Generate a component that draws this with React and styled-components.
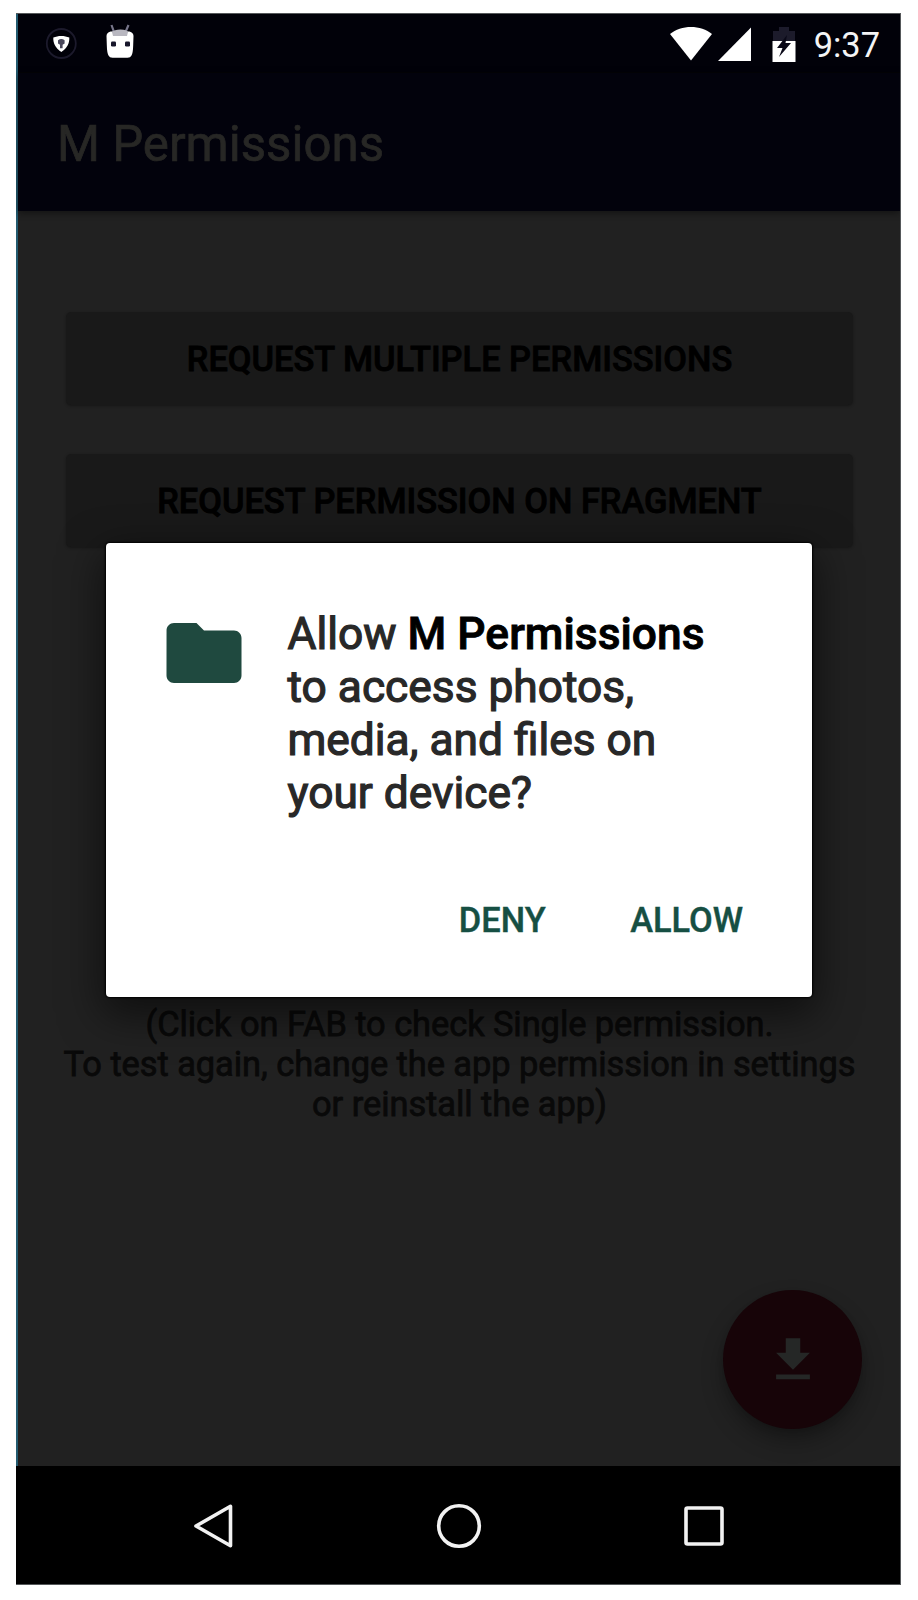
import React from "react";
import styled, { createGlobalStyle } from "styled-components";

const GlobalStyle = createGlobalStyle`
  * { box-sizing: border-box; }
  body { margin: 0; background: #fff; font-family: Roboto, sans-serif; }
  svg { display: block; flex: none; }
`;

const Page = styled.div`
  width: 918px;
  height: 1600px;
  padding: 13px 16px 0;
`;

const Phone = styled.main`
  position: relative;
  display: flex;
  flex-direction: column;
  width: 885px;
  height: 1572px;
  background: #212121;
  border: 1px solid #55585a;
  border-left: 0;
  overflow: hidden;
`;

const Screen = styled.div`
  display: flex;
  flex-direction: column;
  height: 1452px;
  border-left: 2px solid #235b70;
`;

const StatusBar = styled.header`
  display: flex;
  align-items: flex-start;
  justify-content: space-between;
  height: 58px;
  padding: 9px 20px 0 27px;
  background: #010109;
`;

const StatusGroup = styled.div`
  display: flex;
  align-items: flex-start;
  gap: ${(p) => p.$gap};
`;

const Clock = styled.time`
  margin-top: 1px;
  color: #f4f4f6;
  font-size: 34.4px;
  line-height: 42px;
`;

const AppBar = styled.div`
  display: flex;
  align-items: center;
  height: 139px;
  padding: 3px 0 0 39px;
  background: #02020c;
  border-top: 1px solid #020205;
  box-shadow: 0 2px 7px rgba(0, 0, 0, 0.45);
`;

const Title = styled.h1`
  margin: 0;
  color: #272725;
  font-size: 49.2px;
  font-weight: 400;
  -webkit-text-stroke: 0.7px #272725;
`;

const Content = styled.section`
  display: flex;
  flex-direction: column;
  height: 1255px;
  padding: 101px 47px 37px 48px;
`;

const RequestButton = styled.button`
  height: 93px;
  margin: 0 0 49px;
  padding: 0;
  border: 0;
  border-radius: 5px;
  background: #191919;
  box-shadow: 0 1px 3px rgba(0, 0, 0, 0.35);
  color: #000;
  font: 500 34.4px Roboto, sans-serif;
  -webkit-text-stroke: 0.8px #000;
`;

const Hint = styled.p`
  margin: 408px -20px 0;
  color: #090909;
  font-size: 34.4px;
  line-height: 40px;
  letter-spacing: -0.05px;
  text-align: center;
  white-space: nowrap;
  -webkit-text-stroke: 0.8px #090909;
`;

const Fab = styled.button`
  display: flex;
  align-items: center;
  justify-content: center;
  align-self: flex-end;
  width: 139px;
  height: 139px;
  margin: auto -9px 0 0;
  padding: 0;
  border: 0;
  border-radius: 50%;
  background: #170408;
  box-shadow: 0 12px 22px rgba(0, 0, 0, 0.3), 0 3px 6px rgba(0, 0, 0, 0.1);
`;

const NavBar = styled.nav`
  display: flex;
  align-items: center;
  justify-content: center;
  flex: 1;
  padding-left: 1px;
  background: #000;
`;

const NavButton = styled.button`
  display: flex;
  align-items: center;
  justify-content: center;
  width: 245.5px;
  height: 100%;
  padding: 2px 0 0;
  border: 0;
  background: none;
`;

const Dialog = styled.div`
  position: absolute;
  top: 529px;
  left: 90px;
  width: 706px;
  height: 454px;
  display: flex;
  flex-direction: column;
  padding: 65px 52px 0 53px;
  border-radius: 4px;
  background: #fff;
  box-shadow: 0 0 2px 1px #000, 0 14px 42px 4px rgba(0, 0, 0, 0.55);
`;

const DialogBody = styled.div`
  display: flex;
  gap: 38.5px;
`;

const Message = styled.p`
  margin: 0;
  color: #282828;
  font-size: 44.3px;
  line-height: 53px;
  white-space: nowrap;
  -webkit-text-stroke: 1.2px #282828;
`;

const AppName = styled.b`
  color: #000;
  font-weight: 500;
  letter-spacing: 0.05px;
  -webkit-text-stroke: 0.9px #000;
`;

const Actions = styled.div`
  display: flex;
  justify-content: flex-end;
  gap: 84.5px;
  margin-top: 71px;
  padding-right: 17px;
`;

const ActionButton = styled.button`
  padding: 0;
  border: 0;
  background: none;
  color: #164f43;
  font: 500 34.4px/58px Roboto, sans-serif;
  -webkit-text-stroke: 0.4px #164f43;
`;

const ShieldIcon = () => (
  <svg width="34" height="40" viewBox="0 0 34 40">
    <circle cx="16.3" cy="20.5" r="14.5" fill="none" stroke="#1c1a2c" strokeWidth="1.8" />
    <path d="M16.3 13c3 0 5.500.6 8 1.500.3 6-2.300 10.800-8 14.500-5.700-3.700-8.300-8.500-8-14.500 2.500-.9 5-1.500 8-1.500z" fill="#fff" />
    <path d="M13 17.300q3.300-2.600 6.600 0v3.200l-2 1.200v3.600h-2.600v-3.600l-2-1.200z" fill="#4a485c" />
  </svg>
);

const RobotIcon = () => (
  <svg width="34" height="40" viewBox="0 0 34 40">
    <path d="M7.500 2l2.500 7M24.500 2l-3 7" stroke="#77768a" strokeWidth="2.200" />
    <path d="M2.500 13q0-3.500 4-4.500h19q4 1 4 4.500l-.3 9q-.2 8-1.700 10.500-1 2.200-4 2.200H8.500q-3 0-4-2.200Q3 30 2.800 22z" fill="#fff" />
    <path d="M8 9q2-2.500 8.500-2.500T24 9l-1 4H9z" fill="#b8b7c0" />
    <rect x="7" y="18.500" width="5" height="5" rx="1.200" fill="#17162b" />
    <rect x="21" y="18.500" width="5" height="5" rx="1.200" fill="#17162b" />
  </svg>
);

const WifiIcon = () => (
  <svg width="42" height="40" viewBox="0 0 42 40">
    <path d="M0 11C11 1.500 31 1.500 42 11L21 37.500z" fill="#fff" />
  </svg>
);

const SignalIcon = () => (
  <svg width="35" height="40" viewBox="0 0 35 40">
    <path d="M34 4.500v33.500H1z" fill="#fff" />
  </svg>
);

const BatteryIcon = () => (
  <svg width="24" height="40" viewBox="0 0 24 40">
    <path d="M7 4h10v4h6v11H1V8h6z" fill="#1c1b2b" />
    <path d="M0.500 18h23v21H0.500z" fill="#fff" />
    <path d="M15 12L5 25h5.500L7 34l12-14h-5.500z" fill="#0a0918" />
  </svg>
);

const FolderIcon = () => (
  <svg width="90" height="90" viewBox="0 0 24 24">
    <path fill="#1f493f" d="M10 4H4c-1.100 0-1.990.9-1.990 2L2 18c0 1.100.9 2 2 2h16c1.100 0 2-.9 2-2V8c0-1.100-.9-2-2-2h-8l-2-2z" />
  </svg>
);

const DownloadIcon = () => (
  <svg width="58" height="58" viewBox="0 0 24 24">
    <path fill="#252726" d="M19 9h-4V3H9v6H5l7 7 7-7zM5 18v2h14v-2H5z" />
  </svg>
);

const NAV = [
  ["Back", <path key="b" d="M7 24L41.500 4.300v39.400z" />],
  ["Home", <circle key="h" cx="24" cy="24" r="20.300" />],
  ["Overview", <rect key="o" x="6" y="6" width="36" height="36" rx="1.500" />],
];

export default function App() {
  return (
    <Page>
      <GlobalStyle />
      <Phone>
        <Screen>
          <StatusBar>
            <StatusGroup $gap="25px">
              <ShieldIcon />
              <RobotIcon />
            </StatusGroup>
            <StatusGroup $gap="20px">
              <StatusGroup $gap="5px">
                <WifiIcon />
                <SignalIcon />
              </StatusGroup>
              <StatusGroup $gap="18px">
                <BatteryIcon />
                <Clock>9:37</Clock>
              </StatusGroup>
            </StatusGroup>
          </StatusBar>
          <AppBar>
            <Title>M Permissions</Title>
          </AppBar>
          <Content>
            <RequestButton>REQUEST MULTIPLE PERMISSIONS</RequestButton>
            <RequestButton>REQUEST PERMISSION ON FRAGMENT</RequestButton>
            <Hint>
              (Click on FAB to check Single permission.
              <br />
              To test again, change the app permission in settings
              <br />
              or reinstall the app)
            </Hint>
            <Fab aria-label="Download">
              <DownloadIcon />
            </Fab>
          </Content>
        </Screen>
        <NavBar>
          {NAV.map(([label, shape]) => (
            <NavButton key={label} aria-label={label}>
              <svg width="48" height="48" viewBox="0 0 48 48" fill="none" stroke="#f2f2f2" strokeWidth="3.600" strokeLinejoin="round">
                {shape}
              </svg>
            </NavButton>
          ))}
        </NavBar>
        <Dialog role="dialog">
          <DialogBody>
            <FolderIcon />
            <Message>
              Allow <AppName>M Permissions</AppName>
              <br />
              to access photos,
              <br />
              media, and files on
              <br />
              your device?
            </Message>
          </DialogBody>
          <Actions>
            <ActionButton>DENY</ActionButton>
            <ActionButton>ALLOW</ActionButton>
          </Actions>
        </Dialog>
      </Phone>
    </Page>
  );
}
